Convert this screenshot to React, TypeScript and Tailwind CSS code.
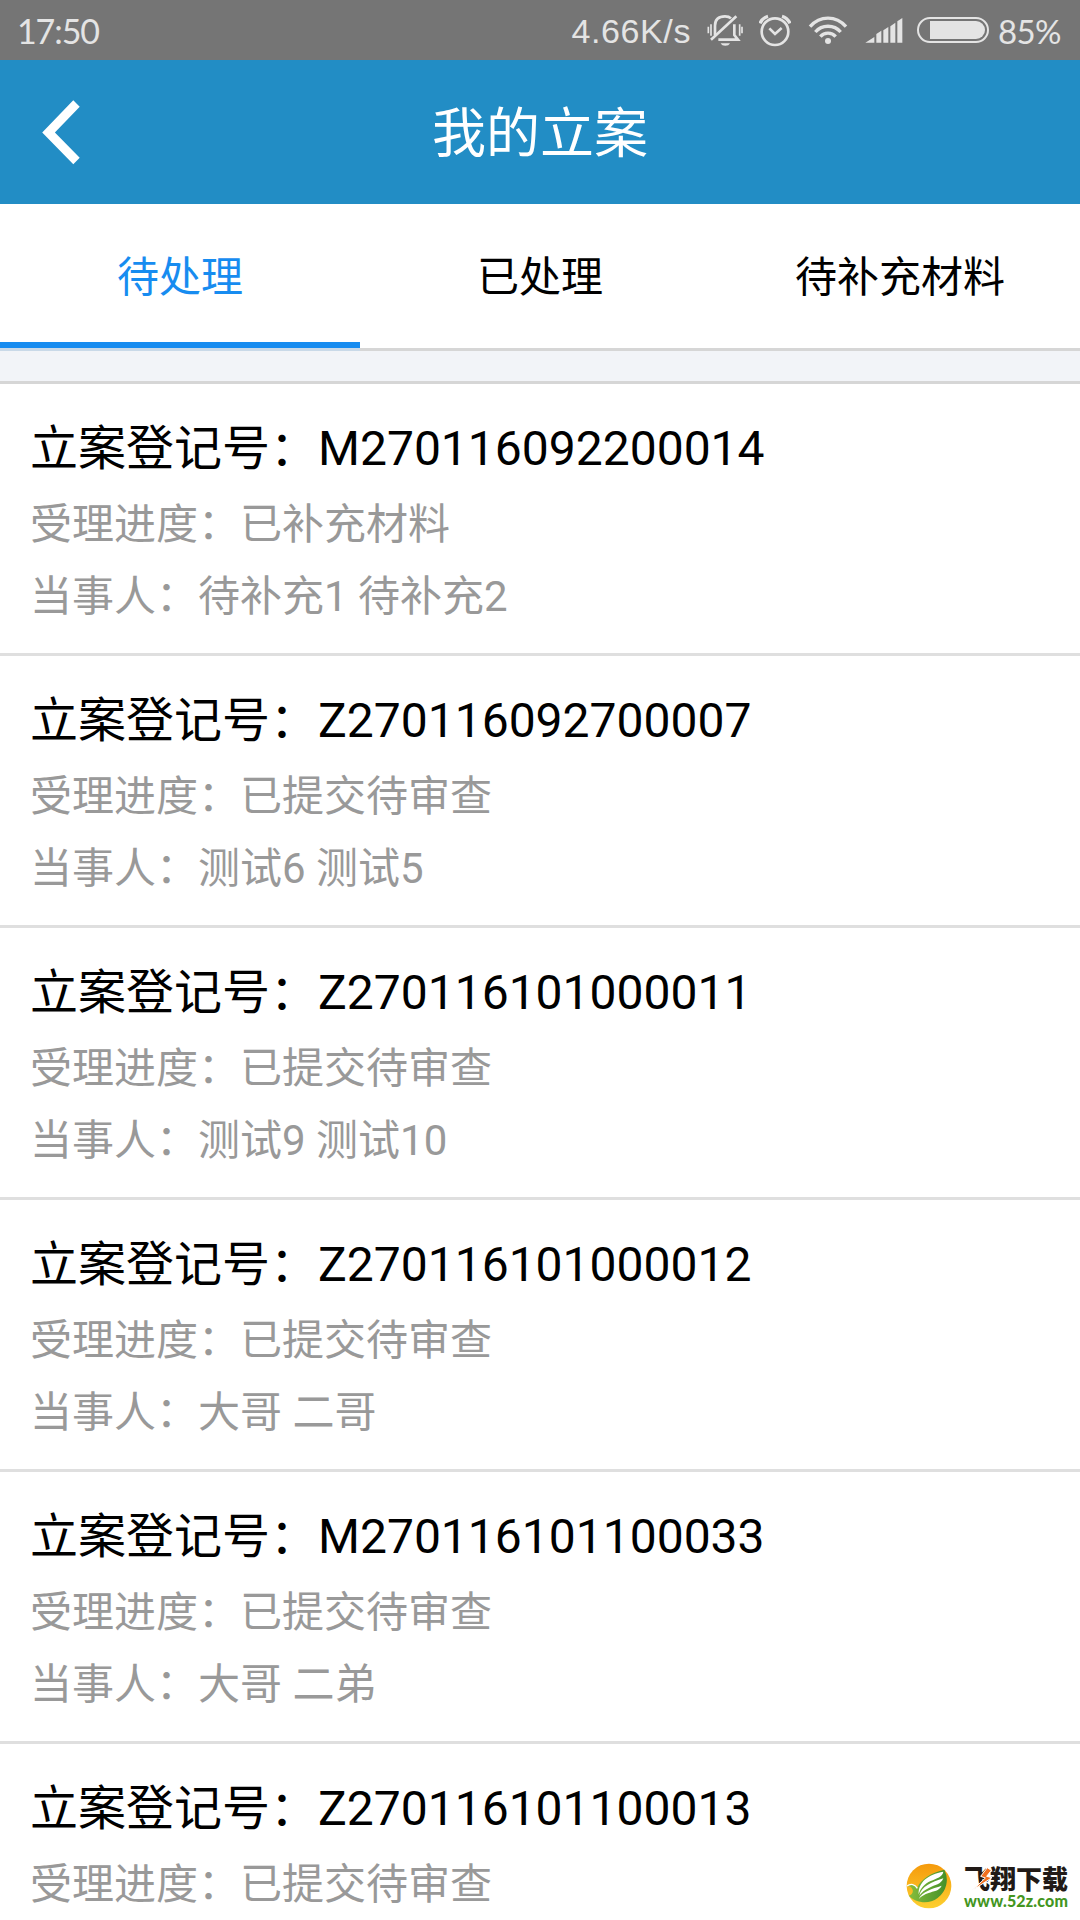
import React, { useState } from 'react';

interface CaseItem {
  id: string;
  progress: string;
  parties?: string;
}

const tabs = ['待处理', '已处理', '待补充材料'];

const cases: CaseItem[] = [
  { id: 'M270116092200014', progress: '已补充材料', parties: '待补充1 待补充2' },
  { id: 'Z270116092700007', progress: '已提交待审查', parties: '测试6 测试5' },
  { id: 'Z270116101000011', progress: '已提交待审查', parties: '测试9 测试10' },
  { id: 'Z270116101000012', progress: '已提交待审查', parties: '大哥 二哥' },
  { id: 'M270116101100033', progress: '已提交待审查', parties: '大哥 二弟' },
  { id: 'Z270116101100013', progress: '已提交待审查' },
];

const MuteIcon = () => (
  <svg width="36" height="34" viewBox="0 0 108 102" fill="none" stroke="#e4e4e4" strokeWidth="8">
    <path d="M24 66V38C24 18 36 10 54 10c8 0 14 2 18 6M82 34v32l11 14H34" />
    <path d="M12 80L88 10" />
    <path d="M4 41v20M12 34v34M98 34v34M105 41v20" strokeWidth="5" />
    <path d="M41 91h28c-4 10-24 10-28 0z" fill="#e4e4e4" stroke="none" />
  </svg>
);

const AlarmIcon = () => (
  <svg width="32" height="34" viewBox="0 0 96 102" fill="none" stroke="#e4e4e4" strokeWidth="8">
    <circle cx="48" cy="56" r="40" />
    <path d="M3 31C8 20 16 13 27 10M69 10c11 3 19 10 24 21" strokeWidth="10" />
    <path d="M31 46l17 17 20-18" />
  </svg>
);

const WifiIcon = () => (
  <svg width="40" height="30" viewBox="0 0 120 90" fill="none" stroke="#e4e4e4" strokeWidth="10">
    <path d="M6 35C36 1 84 1 114 35M22 51c20-23 56-23 76 0M37 65c12-14 34-14 46 0" />
    <circle cx="60" cy="78" r="9" fill="#e4e4e4" stroke="none" />
  </svg>
);

const SignalIcon = () => (
  <svg width="38" height="26" viewBox="0 0 114 78" fill="#e4e4e4">
    <path d="M1 77L28 60V77zM34 77V51L49 41V77zM55 77V40L70 30V77zM76 77V28L91 17V77zM97 77V13L112 3V77z" />
  </svg>
);

const BatteryIcon = () => (
  <svg width="72" height="26" viewBox="0 0 216 78">
    <rect x="3" y="3" width="210" height="72" rx="36" fill="none" stroke="#e4e4e4" strokeWidth="6" />
    <path d="M39 12h138a27 27 0 0 1 0 54H39z" fill="#e4e4e4" />
  </svg>
);

const StatusBar = () => (
  <div className="flex h-[60px] items-center bg-[#757575] pl-[17px] text-[34px] leading-[60px] text-[#e4e4e4]">
    <span className="pt-0.5 font-['Lato',sans-serif] text-[34px] tracking-[-1.1px]">17:50</span>
    <span className="ml-auto pt-0.5 font-['Liberation_Sans',sans-serif] tracking-[0.6px]">4.66K/s</span>
    <div className="ml-[16px]"><MuteIcon /></div>
    <div className="ml-[16px]"><AlarmIcon /></div>
    <div className="ml-[17px]"><WifiIcon /></div>
    <div className="ml-[17px]"><SignalIcon /></div>
    <div className="ml-[14px]"><BatteryIcon /></div>
    <span className="ml-[9px] w-[82px] pt-0.5 font-['Lato',sans-serif] text-[33px] tracking-[-0.6px]">85%</span>
  </div>
);

const Header = () => (
  <header className="grid h-36 grid-cols-[120px_1fr_120px] items-center bg-[#228dc5]">
    <button className="pl-[42px]">
      <svg width="40" height="66" viewBox="0 0 40 66" fill="none" stroke="#fff" strokeWidth="9">
        <path d="M34.500 4.500L6.500 33.500L34.500 62" />
      </svg>
    </button>
    <h1 className="pt-[6px] text-center text-[54px] leading-[72px] text-white">我的立案</h1>
  </header>
);

const CaseRow: React.FC<{ item: CaseItem }> = ({ item }) => (
  <li className="h-[272px] border-b-[3px] border-[#dfdfdf] px-[30px] pt-[35px]">
    <h2 className="mb-2.5 text-[48px] leading-[60px] text-black">立案登记号：{item.id}</h2>
    <p className="text-[42px] leading-[72px] text-[#999]">受理进度：{item.progress}</p>
    {item.parties && (
      <p className="text-[42px] leading-[72px] text-[#999]">当事人：{item.parties}</p>
    )}
  </li>
);

const Watermark = () => (
  <div className="absolute right-0 bottom-0 flex h-[70px] w-[178px] items-start pt-[13px] pl-1">
    <svg width="46" height="46" viewBox="0 0 138 138">
      <defs>
        <linearGradient id="sun" x1="0" y1="0" x2="0" y2="1">
          <stop offset="0" stopColor="#f59a0c" />
          <stop offset="1" stopColor="#fdd030" />
        </linearGradient>
        <linearGradient id="leaf" x1="0" y1="0" x2="1" y2="0">
          <stop offset="0" stopColor="#8abf3c" />
          <stop offset="1" stopColor="#43902a" />
        </linearGradient>
      </defs>
      <circle cx="69" cy="69" r="67" fill="url(#sun)" />
      <path d="M115 20A67 67 0 0 1 8 98C18 96 22 88 20 80C17 72 10 69 3 69C14 60 28 64 34 74C44 48 78 28 115 20z" fill="url(#leaf)" />
      {/* wing feathers */}
      <path d="M38 94C36 58 66 34 112 26C110 42 92 46 74 54C56 62 44 74 38 94z" fill="#fff" />
      <path d="M40 98C46 70 76 58 112 46C106 64 86 66 70 74C56 80 46 88 40 98z" fill="#fff" />
      <path d="M38 108C50 84 78 78 107 68C100 84 82 84 68 90C56 94 46 100 38 108z" fill="#fff" />
      <path d="M3 69C14 60 28 64 34 76" fill="none" stroke="#fff" strokeWidth="4" />
    </svg>
    <div className="relative ml-[12px] flex flex-col whitespace-nowrap pt-[3px]">
      <span className="text-[26px] leading-[28px] font-black text-[#211a17]">飞翔下载</span>
      <span className="font-['Lato',sans-serif] text-[16px] leading-[14px] font-black tracking-[0.15px] text-[#44961f]">www.52z.com</span>
      <svg className="absolute top-[3px] left-[7px]" width="22" height="26" viewBox="0 0 66 78">
        <path d="M49 5L29 31L43 36L5 72L63 35L47 31L61 13z" fill="#f0701f" stroke="#fff" strokeWidth="3" />
      </svg>
    </div>
  </div>
);

const App: React.FC = () => {
  const [active, setActive] = useState(0);

  return (
    <div
      lang="zh-CN"
      className="relative h-[1920px] w-[1080px] overflow-hidden bg-white font-['Roboto','Noto_Sans_CJK_SC',sans-serif]"
    >
      <StatusBar />
      <Header />
      <nav className="grid grid-cols-3">
        {tabs.map((tab, i) => (
          <button
            key={tab}
            onClick={() => setActive(i)}
            className={
              i === active
                ? 'h-[147px] border-b-[3px] border-[#c9d9e8] text-[42px] text-[#178cf0]'
                : 'h-[147px] border-b-[3px] border-[#d6d6d6] text-[42px] text-black'
            }
          >
            <span
              className={
                i === active
                  ? 'block h-36 border-b-[6px] border-[#178cf0] leading-[148px]'
                  : 'block h-36 leading-[148px]'
              }
            >
              {tab}
            </span>
          </button>
        ))}
      </nav>
      <div className="h-[33px] border-b-[3px] border-[#d6d6d6] bg-[#f2f4f8]" />
      <ul>
        {cases.map((item) => (
          <CaseRow key={item.id} item={item} />
        ))}
      </ul>
      <Watermark />
    </div>
  );
};

export default App;
